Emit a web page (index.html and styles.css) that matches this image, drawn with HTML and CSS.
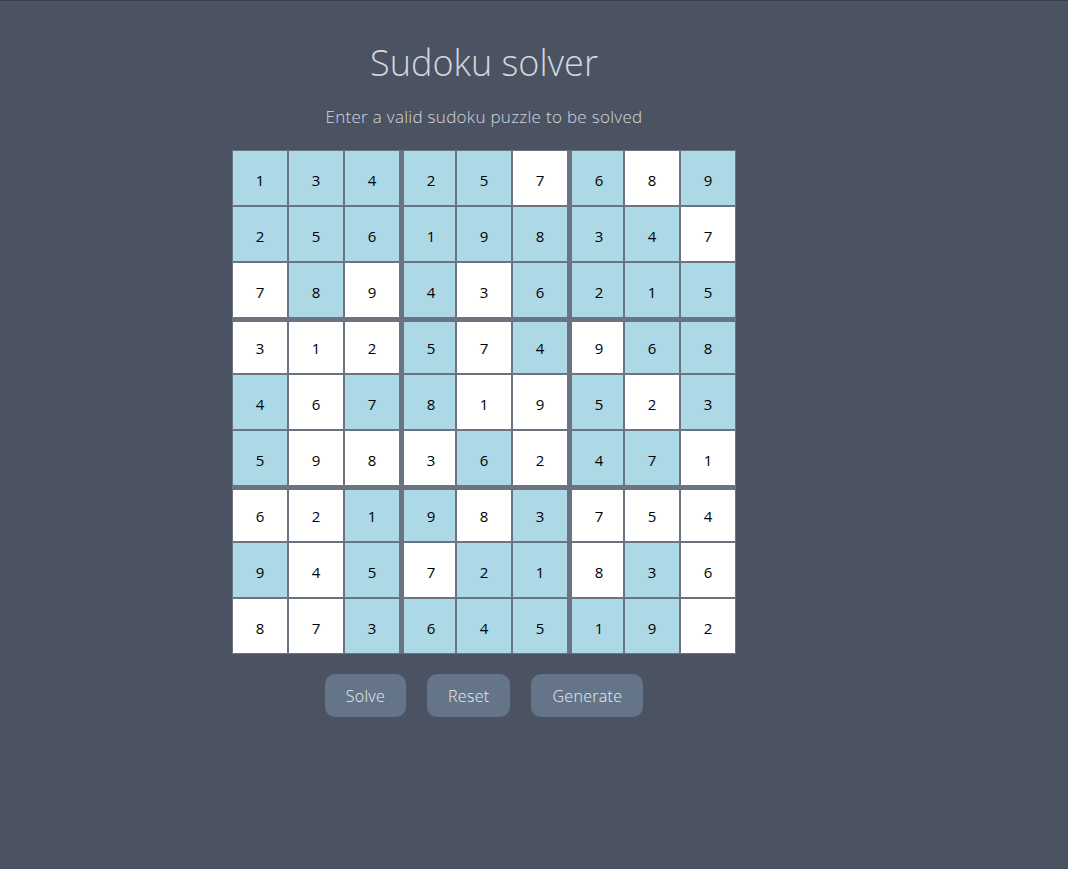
FILE: index.html
```html
<!DOCTYPE html>
<html lang="en">
<head>
<meta charset="utf-8">
<title>Sudoku solver</title>
<link rel="stylesheet" href="styles.css">
</head>
<body>
<main class="app">
  <h1 class="title">Sudoku solver</h1>
  <p class="subtitle">Enter a valid sudoku puzzle to be solved</p>
  <div class="board">
    <div class="cell b">1</div><div class="cell b">3</div><div class="cell b">4</div><div class="cell b">2</div><div class="cell b">5</div><div class="cell">7</div><div class="cell b">6</div><div class="cell">8</div><div class="cell b">9</div>
    <div class="cell b">2</div><div class="cell b">5</div><div class="cell b">6</div><div class="cell b">1</div><div class="cell b">9</div><div class="cell b">8</div><div class="cell b">3</div><div class="cell b">4</div><div class="cell">7</div>
    <div class="cell">7</div><div class="cell b">8</div><div class="cell">9</div><div class="cell b">4</div><div class="cell">3</div><div class="cell b">6</div><div class="cell b">2</div><div class="cell b">1</div><div class="cell b">5</div>
    <div class="cell">3</div><div class="cell">1</div><div class="cell">2</div><div class="cell b">5</div><div class="cell">7</div><div class="cell b">4</div><div class="cell">9</div><div class="cell b">6</div><div class="cell b">8</div>
    <div class="cell b">4</div><div class="cell">6</div><div class="cell b">7</div><div class="cell b">8</div><div class="cell">1</div><div class="cell">9</div><div class="cell b">5</div><div class="cell">2</div><div class="cell b">3</div>
    <div class="cell b">5</div><div class="cell">9</div><div class="cell">8</div><div class="cell">3</div><div class="cell b">6</div><div class="cell">2</div><div class="cell b">4</div><div class="cell b">7</div><div class="cell">1</div>
    <div class="cell">6</div><div class="cell">2</div><div class="cell b">1</div><div class="cell b">9</div><div class="cell">8</div><div class="cell b">3</div><div class="cell">7</div><div class="cell">5</div><div class="cell">4</div>
    <div class="cell b">9</div><div class="cell">4</div><div class="cell b">5</div><div class="cell">7</div><div class="cell b">2</div><div class="cell b">1</div><div class="cell">8</div><div class="cell b">3</div><div class="cell">6</div>
    <div class="cell">8</div><div class="cell">7</div><div class="cell b">3</div><div class="cell b">6</div><div class="cell b">4</div><div class="cell b">5</div><div class="cell b">1</div><div class="cell b">9</div><div class="cell">2</div>
  </div>
  <div class="actions">
    <button class="btn" type="button">Solve</button>
    <button class="btn" type="button">Reset</button>
    <button class="btn" type="button">Generate</button>
  </div>
</main>
</body>
</html>
```

FILE: styles.css
```css
html, body {
  margin: 0;
  padding: 0;
}

body {
  background: #4b5363;
  border-top: 1px solid #3a3d43;
  min-height: 868px;
  font-family: "Open Sans", "DejaVu Sans", sans-serif;
}

.app {
  width: 968px;
  display: flex;
  flex-direction: column;
  align-items: center;
}

.title {
  margin: 37px 0 0;
  font-size: 36px;
  line-height: 49px;
  font-weight: 300;
  color: #d3d7dd;
}

.subtitle {
  margin: 19px 0 0;
  font-size: 17px;
  line-height: 22px;
  font-weight: 300;
  letter-spacing: 0.3px;
  color: #d3d7dd;
}

.board {
  margin-top: 22px;
  display: grid;
  grid-template-columns: repeat(9, 56px);
  grid-auto-rows: 56px;
}

.cell {
  box-sizing: border-box;
  border: 1px solid #6b7280;
  background: #ffffff;
  color: #000000;
  font-size: 15px;
  display: flex;
  align-items: center;
  justify-content: center;
  padding-top: 3px;
}

.cell.b {
  background: #add8e6;
}

.cell:nth-child(9n+4),
.cell:nth-child(9n+7) {
  border-left-width: 4px;
  padding-left: 3px;
}

.cell:nth-child(n+28):nth-child(-n+36),
.cell:nth-child(n+55):nth-child(-n+63) {
  border-top-width: 4px;
  padding-top: 0;
}

.actions {
  margin-top: 20px;
  display: flex;
  gap: 21px;
}

.btn {
  height: 43px;
  padding: 0 21px;
  border: none;
  border-radius: 10px;
  background: #647489;
  color: #eceef1;
  font-family: "Open Sans", "DejaVu Sans", sans-serif;
  font-size: 16px;
  font-weight: 300;
  letter-spacing: 0.3px;
}
```
